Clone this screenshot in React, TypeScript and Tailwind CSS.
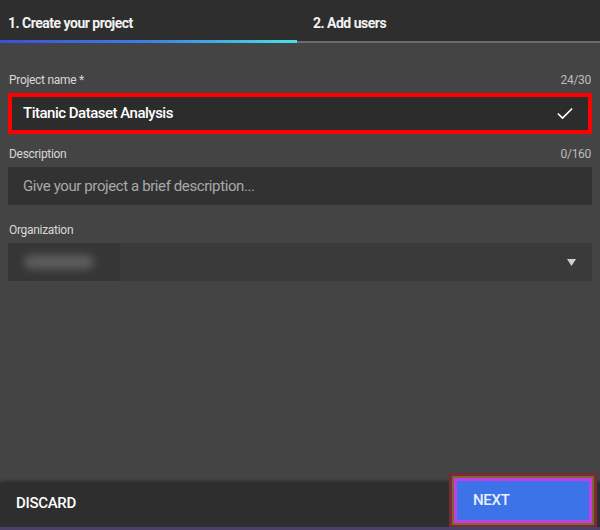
import { Check } from 'lucide-react';

const font = { fontFamily: '"Roboto", "Liberation Sans", sans-serif' };

function FieldLabel({ label, count }: { label: string; count?: string }) {
  return (
    <div className="flex items-end justify-between px-[9px] pb-[6px] text-[12px] leading-[14px] tracking-[-0.3px] text-[#d8d8d8]">
      <span>{label}</span>
      {count && <span className="text-[#bdbdbd]">{count}</span>}
    </div>
  );
}

export default function App() {
  return (
    <div className="flex h-[530px] w-[600px] flex-col bg-[#444444]" style={font}>
      {/* tabs */}
      <div className="bg-[#2e2e2e]">
        <div className="flex h-[40px] items-center pt-[6px] text-[14px] font-bold tracking-[-0.5px] text-[#f2f2f2]">
          <div className="w-[297px] pl-[8px]">1. Create your project</div>
          <div className="pl-[16px]">2. Add users</div>
        </div>
        <div className="flex h-[3px] items-center">
          <div className="h-[3px] w-[297px] bg-gradient-to-r from-[#3b4fd8] via-[#3f7fe0] to-[#4ce0e6]" />
          <div className="h-[2px] flex-1 bg-[#6a6a6a]" />
        </div>
      </div>

      {/* form */}
      <div className="flex flex-1 flex-col pt-[30px]">
        <FieldLabel label="Project name *" count="24/30" />
        <div className="mx-[8px] flex h-[41px] items-center justify-between border-[4px] border-[#ff0000] bg-[#2c2c2c] pl-[11px] pr-[13px]">
          <span className="text-[15px] font-medium tracking-[-0.5px] text-white">Titanic Dataset Analysis</span>
          <Check className="size-[20px] text-white" strokeWidth={2} />
        </div>

        <div className="mt-[13px]">
          <FieldLabel label="Description" count="0/160" />
        </div>
        <div className="mx-[8px] flex h-[38px] items-center bg-[#323232] pl-[15px] text-[15px] tracking-[-0.4px] text-[#a9a9a9]">
          Give your project a brief description...
        </div>

        <div className="mt-[18px]">
          <FieldLabel label="Organization" />
        </div>
        <div className="mx-[8px] flex h-[38px] items-center justify-between bg-[#3a3a3a] pr-[16px]">
          <div className="flex h-full w-[112px] items-center bg-[#363636] pl-[16px]">
            <div className="h-[14px] w-[70px] rounded-full bg-[#5e5e5e] blur-[4px]" />
          </div>
          <svg width="9" height="7" viewBox="0 0 9 7">
            <path d="M0 0 L9 0 L4.5 7 Z" fill="#d0d0d0" />
          </svg>
        </div>
      </div>

      {/* footer */}
      <div className="flex h-[44px] items-center justify-between bg-[#2e2e2e] pb-[4px] shadow-[0_-2px_3px_rgba(0,0,0,0.35)]">
        <span className="pl-[16px] text-[15px] font-medium tracking-[-0.3px] text-white">DISCARD</span>
        <div className="mr-[3px] -mt-[6px] h-[55px] w-[148px] border-[3px] border-[#7a2a3a] bg-[#7a6a2a] p-[2px]">
          <div className="flex h-full items-center border-[3px] border-[#c43ee8] bg-[#3d73e9] pl-[16px] text-[15px] font-medium tracking-[-0.3px] text-[#e8f0ff]">
            NEXT
          </div>
        </div>
      </div>
      <div className="h-[3px] bg-[#4b4168]" />
    </div>
  );
}
